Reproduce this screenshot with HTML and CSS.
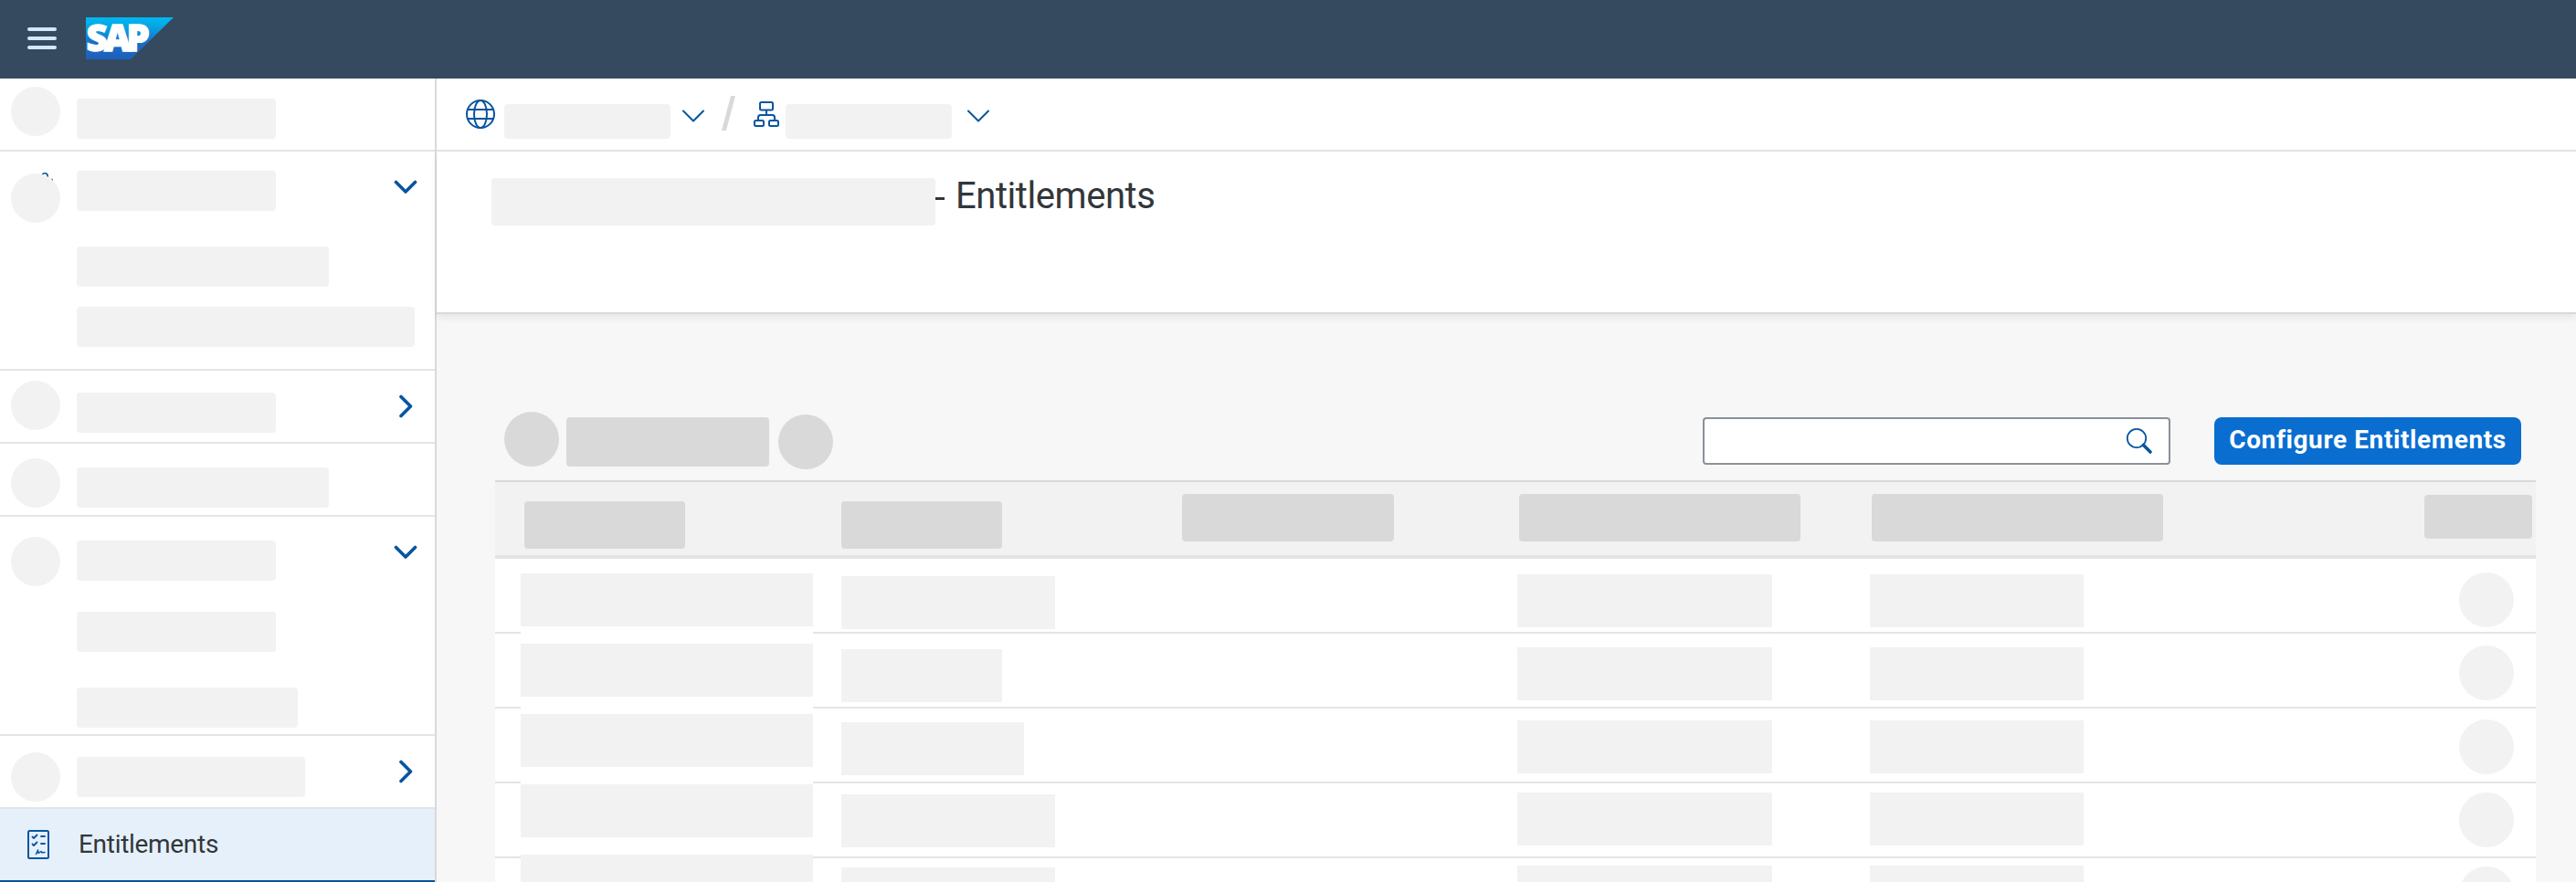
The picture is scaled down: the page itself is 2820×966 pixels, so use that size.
FILE: index.html
```html
<!DOCTYPE html>
<html lang="en">
<head>
<meta charset="utf-8">
<title>Entitlements</title>
<link rel="stylesheet" href="styles.css">
</head>
<body>
<header class="shell">
  <svg class="menu" width="32" height="24" viewBox="0 0 32 24"><g fill="#d1e8ff"><rect width="32" height="4" rx="2"/><rect y="10" width="32" height="4" rx="2"/><rect y="20" width="32" height="4" rx="2"/></g></svg>
  <svg class="logo" width="96" height="46" viewBox="0 0 96 46">
    <defs><linearGradient id="sap" x1="0" y1="0" x2="0" y2="1"><stop offset="0" stop-color="#00b8f1"/><stop offset=".22" stop-color="#06a5e5"/><stop offset=".6" stop-color="#1870c7"/><stop offset="1" stop-color="#1e5fbb"/></linearGradient></defs>
    <path fill="url(#sap)" d="M0 0H96L49 46H0Z"/>
    <text class="logo-text" x="0.5 20 44.500" y="36.500">SAP</text>
  </svg>
</header>
<div class="app">
  <nav class="side">
    <div class="item">
      <div class="line"><i class="dot d1"></i><i class="bar w218 b1"></i></div>
    </div>
    <div class="item tall">
      <div class="line">
        <svg class="peek" width="14" height="12" viewBox="0 0 14 12" fill="none" stroke="#0854a0"><circle cx="4" cy="5" r="3.200" stroke-width="1.600"/><path d="M11 8.200h1.500v2" stroke-width="1" opacity=".7"/></svg>
        <i class="dot d2"></i><i class="bar w218 b2"></i>
        <svg class="chev" width="26" height="26" viewBox="0 0 26 26"><path d="M2.500 7.500 13 18 23.500 7.500"/></svg>
      </div>
      <i class="bar sub w276 s1"></i>
      <i class="bar sub w370 s2"></i>
    </div>
    <div class="item">
      <div class="line"><i class="dot d3"></i><i class="bar w218 b3"></i>
        <svg class="chev" width="26" height="26" viewBox="0 0 26 26"><path d="M8 2.500 18.500 13 8 23.500"/></svg></div>
    </div>
    <div class="item">
      <div class="line"><i class="dot d4"></i><i class="bar w276 b4"></i></div>
    </div>
    <div class="item tall">
      <div class="line"><i class="dot d5"></i><i class="bar w218 b5"></i>
        <svg class="chev" width="26" height="26" viewBox="0 0 26 26"><path d="M2.500 7.500 13 18 23.500 7.500"/></svg></div>
      <i class="bar sub w218 s3"></i>
      <i class="bar sub w242 s4"></i>
    </div>
    <div class="item">
      <div class="line"><i class="dot d6"></i><i class="bar w250 b6"></i>
        <svg class="chev" width="26" height="26" viewBox="0 0 26 26"><path d="M8 2.500 18.500 13 8 23.500"/></svg></div>
    </div>
    <div class="item selected">
      <svg width="24" height="32" viewBox="0 0 24 32" fill="none" stroke="#0854a0" stroke-width="2" stroke-linecap="round" stroke-linejoin="round"><rect x="1" y="1" width="22" height="30" rx="1.500"/><path stroke-width="1.800" d="M5.500 7.500 7 9l3.500-3.500M15 7h4M5.500 15.500 7 17l3.500-3.500M15 15h4"/><path stroke-width="1.500" d="m9.500 26.500 2-4.500.5 3.500 3-2 .8 1.300 3.200-.4"/></svg>
      <span class="side-text">Entitlements</span>
    </div>
  </nav>
  <main class="main">
    <div class="crumbs">
      <svg class="globe" width="32" height="32" viewBox="0 0 32 32" fill="none" stroke="#0854a0" stroke-width="2"><circle cx="16" cy="16" r="15"/><ellipse cx="16" cy="16" rx="7" ry="15"/><path d="M2 11h28M2 21h28"/></svg>
      <i class="pill"></i>
      <svg class="thin c1" width="26" height="16" viewBox="0 0 26 16"><path d="M2 2.500 13 13.500 24 2.500"/></svg>
      <svg class="slash" width="15" height="38" viewBox="0 0 15 38"><path d="M10 0H15L5 38H0Z" fill="#d9d9d9"/></svg>
      <svg class="org" width="28" height="28" viewBox="0 0 28 28" fill="none" stroke="#0854a0" stroke-width="2"><rect x="7" y="1" width="14" height="8.500" rx="1.500"/><rect x="1" y="21" width="10" height="6" rx="1.500"/><rect x="17" y="21" width="10" height="6" rx="1.500"/><path d="M14 9.500V15M5 21v-3.500q0-2.500 2.500-2.500h13q2.500 0 2.500 2.500V21"/></svg>
      <i class="pill"></i>
      <svg class="thin c2" width="26" height="16" viewBox="0 0 26 16"><path d="M2 2.500 13 13.500 24 2.500"/></svg>
    </div>
    <div class="title"><i class="title-mask"></i><i class="dash"></i><h1>Entitlements</h1></div>
    <section class="content">
      <div class="toolbar">
        <i class="disc"></i><i class="tool-mask"></i><i class="disc low"></i>
        <div class="search"><svg width="30" height="30" viewBox="0 0 30 30" fill="none" stroke="#0854a0"><circle cx="12" cy="12" r="10.200" stroke-width="1.800"/><path d="m19.500 19.500 7.500 7.500" stroke-width="3.600" stroke-linecap="round"/></svg></div>
        <button class="primary"><span>Configure Entitlements</span></button>
      </div>
      <div class="thead"><i class="h1"></i><i class="h2"></i><i class="h3"></i><i class="h4"></i><i class="h5"></i><i class="h6"></i></div>
      <div class="tbody">
        <div class="rows"><div></div><div></div><div></div><div></div><div></div></div>
        <div class="cols">
          <div class="col name"><i></i><i></i><i></i><i></i><i></i></div>
          <div class="col plan"><i></i><i class="short"></i><i class="mid"></i><i></i><i></i></div>
          <div class="col quota"><i></i><i></i><i></i><i></i><i></i></div>
          <div class="col used"><i></i><i></i><i></i><i></i><i></i></div>
          <div class="col action"><i></i><i></i><i></i><i></i><i></i></div>
        </div>
      </div>
    </section>
  </main>
</div>
</body>
</html>
```
FILE: styles.css
```css
* { box-sizing: border-box; }
body { margin: 0; width: 2820px; height: 966px; overflow: hidden; background: #f7f7f7; color: #32363a; font-family: Roboto, "Noto Sans", sans-serif; }
i, svg { display: block; flex: none; }

.shell { display: flex; height: 86px; background: #354a5f; }
.menu { margin: 30px 0 0 30px; }
.logo { margin: 19px 0 0 32px; overflow: visible; }
.logo-text { font: 800 40px "Open Sans", sans-serif; fill: #fff; stroke: #fff; stroke-width: 1.4px; }

.app { display: flex; height: 880px; }

.side { width: 478px; flex: none; border-right: 2px solid #d9d9d9; background: #fff; }
.item { height: 80px; border-bottom: 2px solid #e4e4e4; }
.item.tall { height: 240px; }
.line { position: relative; display: flex; height: 78px; padding-left: 12px; }
.dot { position: relative; width: 54px; height: 54px; margin-right: 18px; border-radius: 50%; background: #f2f2f2; }
.bar { height: 44px; border-radius: 4px; background: #f2f2f2; }
.sub { margin-left: 84px; }
.w218 { width: 218px; }
.w242 { width: 242px; }
.w250 { width: 250px; }
.w276 { width: 276px; }
.w370 { width: 370px; }
.d1 { margin-top: 9px; }
.b1 { margin-top: 22px; }
.d2 { margin-top: 24px; }
.b2 { margin-top: 21px; }
.d3 { margin-top: 11px; }
.b3 { margin-top: 24px; }
.d4 { margin-top: 16px; }
.b4 { margin-top: 26px; }
.d5 { margin-top: 22px; }
.b5 { margin-top: 26px; }
.d6 { margin-top: 18px; }
.b6 { margin-top: 23px; }
.s1 { margin-top: 26px; }
.s2 { margin-top: 22px; }
.s3 { margin-top: 26px; }
.s4 { margin-top: 39px; }
.peek { position: absolute; left: 45px; top: 22px; }
.chev { margin: 26px 19px 0 auto; fill: none; stroke: #0854a0; stroke-width: 3.6px; stroke-linecap: round; stroke-linejoin: round; }
.item.selected { display: flex; align-items: center; gap: 32px; padding-left: 30px; border-bottom-color: #0854a0; background: #e5f0fa; }
.side-text { font-size: 28px; line-height: 32px; letter-spacing: -.3px; }

.main { flex: 1; display: flex; flex-direction: column; min-width: 0; }
.crumbs { display: flex; height: 80px; flex: none; padding-left: 32px; border-bottom: 2px solid #e4e4e4; background: #fff; }
.globe { margin-top: 23px; }
.pill { width: 182px; height: 38px; margin: 28px 0 0 10px; border-radius: 4px; background: #f2f2f2; }
.thin { margin-top: 33px; fill: none; stroke: #0854a0; stroke-width: 2px; stroke-linecap: round; stroke-linejoin: round; }
.c1 { margin-left: 12px; }
.c2 { margin-left: 16px; }
.slash { margin: 19px 0 0 18px; }
.org { margin: 25px 0 0 20px; }
.org + .pill { margin-left: 7px; }

.title { display: flex; height: 178px; flex: none; padding-left: 60px; border-bottom: 2px solid #d9d9d9; background: #fff; box-shadow: 0 4px 8px rgba(0, 0, 0, .07); }
.title-mask { width: 486px; height: 52px; margin-top: 29px; border-radius: 4px; background: #f2f2f2; }
.dash { width: 10px; height: 3px; margin: 50px 12px 0 0; background: #32363a; }
h1 { margin: 25px 0 0; font-size: 40px; font-weight: 400; line-height: 48px; letter-spacing: -.45px; }

.content { width: 2234px; margin-left: 64px; flex: 1; min-height: 0; }
.toolbar { display: flex; height: 182px; padding: 107px 16px 0 10px; }
.disc { width: 60px; height: 60px; border-radius: 50%; background: #d9d9d9; }
.disc.low { margin: 3px 0 0 10px; }
.tool-mask { width: 222px; height: 54px; margin: 6px 0 0 8px; border-radius: 4px; background: #d9d9d9; }
.search { width: 512px; height: 52px; margin: 6px 0 0 auto; padding: 9px 17px 0 0; border: 2px solid #89919a; border-radius: 4px; background: #fff; }
.search svg { margin-left: auto; }
.primary { width: 336px; height: 52px; margin: 6px 0 0 48px; padding: 0; border: 0; border-radius: 8px; background: #0a6ed1; color: #fff; font: 700 28px/50px Roboto, sans-serif; letter-spacing: .6px; white-space: nowrap; }
.primary span { display: block; height: 52px; }

.thead { display: flex; height: 86px; padding-left: 32px; border-top: 2px solid #d9d9d9; border-bottom: 4px solid #e4e4e4; background: #f2f2f2; }
.thead i { height: 52px; margin-top: 13px; border-radius: 4px; background: #d9d9d9; }
.thead .h1 { width: 176px; margin-top: 21px; }
.thead .h2 { width: 176px; margin: 21px 0 0 171px; }
.thead .h3 { width: 232px; margin-left: 197px; }
.thead .h4 { width: 308px; margin-left: 137px; }
.thead .h5 { width: 319px; margin-left: 78px; }
.thead .h6 { width: 118px; height: 48px; margin: 14px 0 0 286px; }

.tbody { display: grid; height: 354px; overflow: hidden; background: #fff; }
.rows, .cols { grid-area: 1 / 1; min-height: 0; }
.rows div { height: 82px; border-bottom: 2px solid #e4e4e4; }
.cols { display: flex; align-items: flex-start; padding-left: 28px; }
.col { display: grid; gap: 21.75px; }
.col i { height: 58px; background: #f2f2f2; }
.name { width: 320px; margin-top: 16px; gap: 19px; background: #fff; }
.plan { width: 234px; margin: 19px 0 0 31px; }
.plan .short { width: 176px; }
.plan .mid { width: 200px; }
.quota { width: 279px; margin: 17px 0 0 506px; }
.used { width: 234px; margin: 17px 0 0 107px; }
.action { width: 60px; margin: 15px 0 0 411px; gap: 20.4px; }
.action i { height: 60px; border-radius: 50%; }
```
